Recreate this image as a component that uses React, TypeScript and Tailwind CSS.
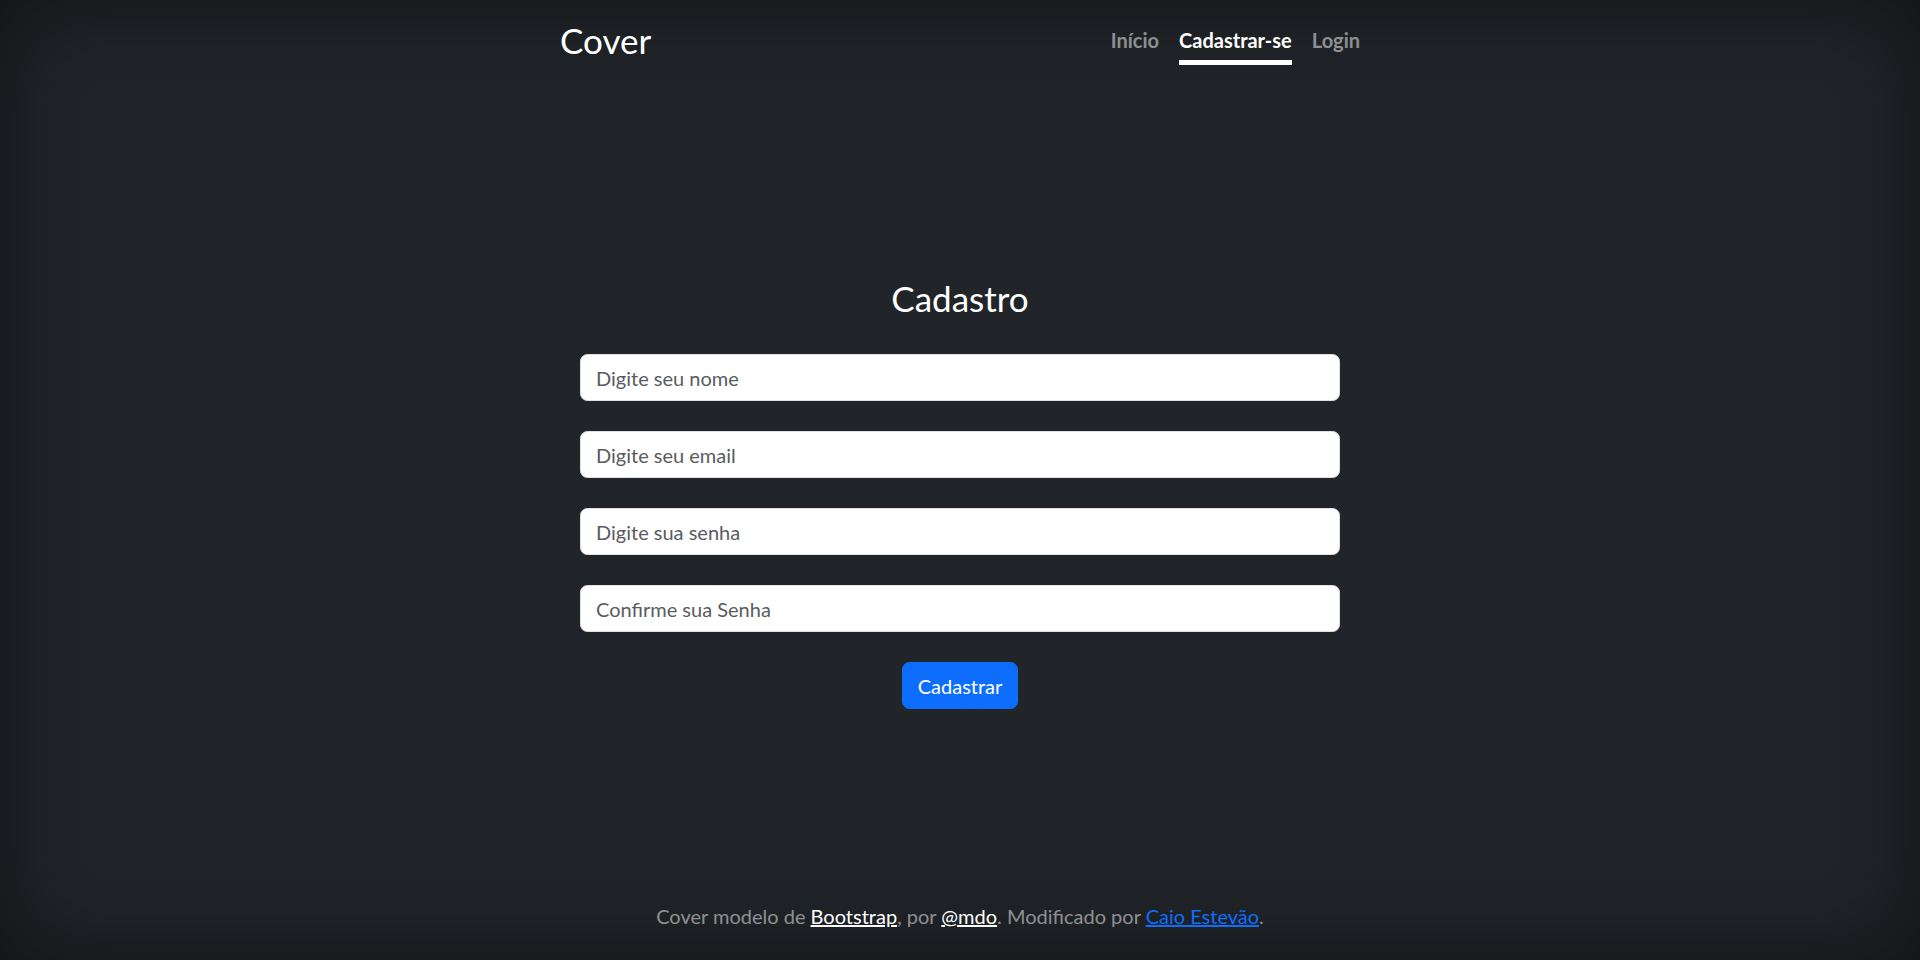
import React from "react";

const font = { fontFamily: "Lato, 'Noto Sans', sans-serif" };

function Field({ placeholder, type = "text" }: { placeholder: string; type?: string }) {
  return (
    <input
      type={type}
      placeholder={placeholder}
      className="block w-full h-[47px] rounded-[7.5px] border border-[#dee2e6] bg-white px-[15px] py-[7.5px] text-[20px] leading-[30px] text-[#212529] placeholder:text-[#595c5f] outline-none"
    />
  );
}

export default function App() {
  return (
    <div
      className="h-[960px] w-full bg-[#212529] text-white flex text-center shadow-[inset_0_0_100px_rgba(0,0,0,0.5)]"
      style={font}
    >
      <div className="w-[840px] mx-auto p-5 flex flex-col h-full">
        <header className="flex justify-between items-start h-[45px]">
          <h3 className="text-[35px] leading-[40px] font-normal m-0">Cover</h3>
          <nav className="flex">
            <a className="ml-5 py-[5px] border-b-[5px] border-transparent text-[20px] leading-[30px] font-bold text-white/50">
              Início
            </a>
            <a className="ml-5 py-[5px] border-b-[5px] border-white text-[20px] leading-[30px] font-bold text-white">
              Cadastrar-se
            </a>
            <a className="ml-5 py-[5px] border-b-[5px] border-transparent text-[20px] leading-[30px] font-bold text-white/50">
              Login
            </a>
          </nav>
        </header>

        <main className="px-5 mt-[212px]">
          <h3 className="text-[35px] leading-[42px] font-normal mb-[35px]">Cadastro</h3>
          <form className="flex flex-col gap-[30px] items-center" onSubmit={(e) => e.preventDefault()}>
            <Field placeholder="Digite seu nome" />
            <Field placeholder="Digite seu email" type="email" />
            <Field placeholder="Digite sua senha" type="password" />
            <Field placeholder="Confirme sua Senha" type="password" />
            <button
              type="submit"
              className="h-[47px] px-[15px] rounded-[7.5px] border border-[#0d6efd] bg-[#0d6efd] text-white text-[20px] leading-[30px]"
            >
              Cadastrar
            </button>
          </form>
        </main>

        <footer className="mt-auto text-white/50">
          <p className="text-[20px] leading-[30px] mb-[9px]">
            Cover modelo de{" "}
            <a className="text-white underline">Bootstrap</a>, por{" "}
            <a className="text-white underline">@mdo</a>. Modificado por{" "}
            <a className="text-[#0d6efd] underline">Caio Estevão</a>.
          </p>
        </footer>
      </div>
    </div>
  );
}
